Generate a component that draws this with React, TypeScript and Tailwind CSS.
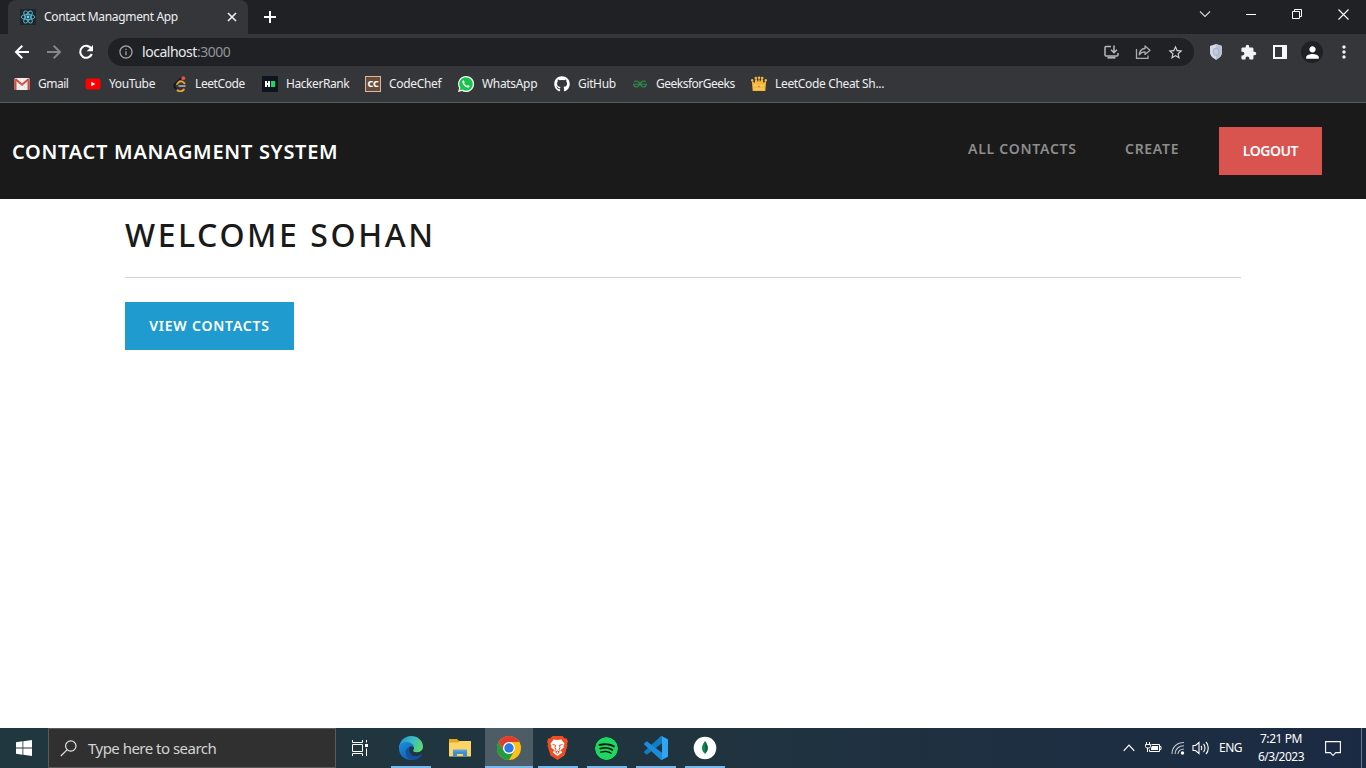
import type { ReactNode } from "react";
import {
  MdExtension,
  MdInfoOutline,
  MdMoreVert,
  MdPerson,
  MdStarBorder,
} from "react-icons/md";
import { FaGithub } from "react-icons/fa";
import { SiGeeksforgeeks, SiSpotify } from "react-icons/si";

function ReactLogo() {
  return (
    <svg width="16" height="16" viewBox="0 0 16 16" className="bg-[#20252b]">
      <g fill="none" stroke="#58bcd6" strokeWidth="0.9">
        <ellipse cx="8" cy="8" rx="6.8" ry="2.6" />
        <ellipse cx="8" cy="8" rx="6.8" ry="2.6" transform="rotate(60 8 8)" />
        <ellipse cx="8" cy="8" rx="6.8" ry="2.6" transform="rotate(120 8 8)" />
      </g>
      <circle cx="8" cy="8" r="1.4" fill="#61dafb" />
    </svg>
  );
}

function TabStrip() {
  return (
    <div className="flex h-[34px] bg-[#202124]">
      <div className="ml-2 flex w-[240px] items-center rounded-t-lg bg-[#35363a] pl-3 pr-[9px] text-xs text-[#eeeff1]">
        <ReactLogo />
        <span className="ml-2 flex-1 whitespace-nowrap tracking-[-0.34px]">Contact Managment App</span>
        <svg width="14" height="14" viewBox="0 0 14 14" fill="none" stroke="#f1f3f4" strokeWidth="1.600"><path d="M3 3l8 8M11 3l-8 8" /></svg>
      </div>
      <div className="flex flex-1 items-center pl-[13px]">
        <svg width="18" height="18" viewBox="0 0 18 18" fill="none" stroke="#fff" strokeWidth="2"><path d="M9 3v12M3 9h12" /></svg>
      </div>
      <div className="flex h-7 items-center">
        <div className="flex w-[46px] justify-center">
          <svg width="12" height="8" viewBox="0 0 12 8" fill="none" stroke="#d6d7d9" strokeWidth="1.1"><path d="M1 1.5l5 5 5-5" /></svg>
        </div>
        <div className="flex w-[46px] justify-center">
          <svg width="10" height="10" viewBox="0 0 10 10"><path d="M0 5h10v1H0z" fill="#fff" /></svg>
        </div>
        <div className="flex w-[46px] justify-center">
          <svg width="10" height="10" viewBox="0 0 10 10" fill="none" stroke="#fff"><path d="M.5 2.5h7v7h-7zM2.5 2.5v-2h7v7h-2" /></svg>
        </div>
        <div className="flex w-[46px] justify-center">
          <svg width="11" height="11" viewBox="0 0 11 11" fill="none" stroke="#fff" strokeWidth="1.1"><path d="M.5.5l10 10M10.5.5l-10 10" /></svg>
        </div>
      </div>
    </div>
  );
}

function Toolbar() {
  return (
    <div className="flex h-9 items-center">
      <div className="flex w-[108px] items-center gap-3 pl-3">
        <svg width="20" height="20" viewBox="0 0 20 20" fill="none" stroke="#fff" strokeWidth="2"><path d="M17 10H4.500M10.300 3.700L4 10l6.300 6.300" /></svg>
        <svg width="20" height="20" viewBox="0 0 20 20" fill="none" stroke="#85868a" strokeWidth="2"><path d="M3 10h12.500M9.700 3.700L16 10l-6.300 6.300" /></svg>
        <svg width="20" height="20" viewBox="0 0 20 20">
          <path d="M15.300 6.600A6 6 0 1 0 15.800 12" fill="none" stroke="#fff" strokeWidth="2.100" />
          <path d="M17 3v6.300h-6.300z" fill="#fff" />
        </svg>
      </div>
      <div className="flex h-7 w-[1086px] items-center rounded-full bg-[#202124] pl-[10px] pr-[10px]">
        <MdInfoOutline size={16} color="#9aa0a6" />
        <div className="ml-2 flex-1 text-[14px] leading-5 tracking-[-0.47px] text-[#e8eaed]">
          localhost<span className="text-[#8f949a]">:3000</span>
        </div>
        <div className="flex items-center gap-4">
          <svg width="16" height="16" viewBox="0 0 16 16" fill="none" stroke="#b5b8bb" strokeWidth="1.5">
            <path d="M8 2.500H3a1 1 0 0 0-1 1v7.400a1 1 0 0 0 1 1h11a1 1 0 0 0 1-1V9" />
            <path d="M11 1.500v7M8 5.700l3 3 3-3" />
            <path d="M4.500 13.700h8" strokeWidth="1.800" />
          </svg>
          <svg width="16" height="16" viewBox="0 0 16 16" fill="none" stroke="#a9acb0" strokeWidth="1.3">
            <path d="M1.500 5v9.400h11.500v-3" />
            <path d="M10 2l5 4.200-5 4.200V7.900c-2.700 0-4.500.7-5.800 2.900.3-3.600 2.300-6 5.800-6.300z" strokeLinejoin="round" />
          </svg>
          <MdStarBorder size={17} color="#d0d2d4" />
        </div>
      </div>
      <div className="flex flex-1 items-center pl-[14px]">
        <svg width="16" height="18" viewBox="0 0 16 18">
          <path d="M8 1l6 1.900v6.300c0 3.600-3.300 6.300-6 7.600-2.700-1.300-6-4-6-7.600V2.900z" fill="#d3d8e6" />
          <path d="M8 1l6 1.900v6.300c0 3.600-3.300 6.300-6 7.600z" fill="#b9c1d5" />
          <ellipse cx="8" cy="8.800" rx="2.800" ry="3.800" fill="#c4cadb" stroke="#9fa8c0" strokeWidth=".8" />
        </svg>
        <MdExtension size={17} color="#f1f3f4" className="ml-[16px]" />
        <svg width="14" height="14" viewBox="0 0 14 14" className="ml-[16px]">
          <path d="M0 0h14v14H0z" fill="#f8f9fa" />
          <path d="M2 2h7v10H2z" fill="#35363a" />
        </svg>
        <div className="ml-[14px] flex h-[22px] w-[22px] items-center justify-center rounded-full bg-[#202124]">
          <MdPerson size={19} color="#fff" />
        </div>
        <MdMoreVert size={20} color="#f1f3f4" className="ml-[11px]" />
      </div>
    </div>
  );
}

function GmailIcon() {
  return (
    <svg width="16" height="16" viewBox="0 0 16 16">
      <rect x="0.500" y="2" width="15" height="12" rx="1" fill="#f0efef" />
      <path d="M.5 14V3.500l2 1.600V14zM15.500 14V3.500l-2 1.600V14z" fill="#d54b3e" />
      <path d="M1.300 3L8 8.700 14.700 3" fill="none" stroke="#d54b3e" strokeWidth="2" />
      <path d="M3.500 13.500L7 8.500M12.500 13.500L9 8.500" stroke="#d2d0d0" strokeWidth=".6" />
    </svg>
  );
}

function YouTubeIcon() {
  return (
    <svg width="16" height="16" viewBox="0 0 16 16">
      <rect x="0.500" y="2.500" width="15" height="11" rx="2.600" fill="#f00" />
      <path d="M6.300 5.700v4.600L10.300 8z" fill="#fff" />
    </svg>
  );
}

function LeetCodeIcon() {
  return (
    <svg width="16" height="16" viewBox="0 0 16 16" fill="none" strokeLinecap="round">
      <path d="M9.500 2L3.500 7.500C1.900 9 2 10.500 3.300 12L5.500 14" stroke="#17181a" strokeWidth="1.900" />
      <path d="M12.500 7.300C10.500 4.900 8.300 4.800 6.600 6.300M5.500 14.200c2 1.800 4.500 1.300 6.300-.700" stroke="#e9a23a" strokeWidth="1.900" />
      <path d="M6.200 6.700L4.800 8.200" stroke="#e9a23a" strokeWidth="1.600" />
      <path d="M7 10h6" stroke="#b8b8b8" strokeWidth="1.600" />
      <circle cx="11.300" cy="2.300" r="2" fill="#d95248" />
    </svg>
  );
}

function HackerRankIcon() {
  return (
    <svg width="16" height="16" viewBox="0 0 16 16">
      <path d="M0 0h16v16H0z" fill="#0e141e" />
      <path d="M3 5h2v2h1V5h2v6H6V9H5v2H3z" fill="#fff" />
      <path d="M9 5h4.200v6H9z" fill="#1fd565" />
    </svg>
  );
}

function CodeChefIcon() {
  return (
    <div className="flex h-4 w-4 items-center justify-center border border-[#d6b99e] bg-[#6a4c38] text-[9px] font-extrabold leading-none tracking-[-0.3px] text-white">
      CC
    </div>
  );
}

function WhatsAppIcon() {
  return (
    <svg width="16" height="16" viewBox="0 0 16 16">
      <path d="M8 0a8 8 0 0 0-6.900 12L0 16l4.100-1.100A8 8 0 1 0 8 0z" fill="#f4f8f5" />
      <path d="M8 1.300a6.700 6.700 0 0 0-5.600 10.400l-.7 2.600 2.700-.7A6.700 6.700 0 1 0 8 1.300z" fill="#18c34b" />
      <path d="M5.600 4.200c-.9.200-1.400 1.200-1.200 2.300.5 2.200 2.500 4.200 4.800 4.900 1.100.3 2.300-.2 2.400-1.500L9.900 9l-.9.900C7.700 9.400 6.700 8.400 6.100 7.100l.7-.9z" fill="#fff" />
    </svg>
  );
}

function CrownIcon() {
  return (
    <svg width="16" height="16" viewBox="0 0 16 16">
      <path d="M.8 4.500L3.500 7l1.300-5.500L7 6l1-5 1 5 2.200-4.500L12.500 7l2.700-2.500L14.300 15H1.700z" fill="#f6b73c" />
      <g fill="#f6b73c"><circle cx="1.200" cy="4.300" r="1.200" /><circle cx="4.800" cy="2" r="1.300" /><circle cx="8" cy="1.700" r="1.300" /><circle cx="11.200" cy="2" r="1.300" /><circle cx="14.800" cy="4.300" r="1.200" /></g>
      <path d="M3 9.500h10M3 12.800h10" stroke="#f9ca62" strokeWidth="1.300" />
      <circle cx="8" cy="10.500" r="1" fill="#df873a" />
    </svg>
  );
}

function Bookmark({ icon, label, box, text }: { icon: ReactNode; label: string; box: string; text: string }) {
  return (
    <div className={`flex items-center gap-2 whitespace-nowrap ${box}`}>
      <span className="flex w-4 shrink-0 justify-center">{icon}</span>
      <span className={text}>{label}</span>
    </div>
  );
}

function BookmarksBar() {
  return (
    <div className="-mt-px flex h-[34px] items-center border-b border-[#59595b] pb-[4px] pl-[14px] text-xs text-[#eeeff1]">
      <Bookmark icon={<GmailIcon />} label="Gmail" box="w-[71px]" text="tracking-[-0.5px]" />
      <Bookmark icon={<YouTubeIcon />} label="YouTube" box="w-[87px]" text="tracking-[-0.35px]" />
      <Bookmark icon={<LeetCodeIcon />} label="LeetCode" box="w-[90px]" text="-ml-px tracking-[-0.4px]" />
      <Bookmark icon={<HackerRankIcon />} label="HackerRank" box="w-[103px]" text="tracking-[-0.43px]" />
      <Bookmark icon={<CodeChefIcon />} label="CodeChef" box="w-[93px]" text="tracking-[-0.33px]" />
      <Bookmark icon={<WhatsAppIcon />} label="WhatsApp" box="w-[96px]" text="tracking-[-0.33px]" />
      <Bookmark icon={<FaGithub size={16} color="#fff" />} label="GitHub" box="w-[78px]" text="tracking-[-0.35px]" />
      <Bookmark icon={<SiGeeksforgeeks size={14} color="#2f8d46" />} label="GeeksforGeeks" box="w-[119px]" text="tracking-[-0.5px]" />
      <Bookmark icon={<CrownIcon />} label="LeetCode Cheat Sh..." box="w-[140px]" text="tracking-[-0.34px]" />
    </div>
  );
}

function SiteHeader() {
  return (
    <header className="flex h-24 items-center justify-between bg-[#1a1a1a] pl-3 pr-11">
      <h1 className="mt-[2px] whitespace-nowrap text-[20px] font-semibold leading-6 tracking-[0.72px] text-white">CONTACT MANAGMENT SYSTEM</h1>
      <nav className="flex items-center whitespace-nowrap text-[14px] font-semibold text-[#8d8d8d]">
        <a className="mb-[6px] w-[157px] tracking-[0.74px]">ALL CONTACTS</a>
        <a className="mb-[6px] w-[94px] tracking-[0.7px]">CREATE</a>
        <button className="h-12 w-[103px] bg-[#d9534f] pb-[2px] text-[14px] font-semibold tracking-[-0.45px] text-white">LOGOUT</button>
      </nav>
    </header>
  );
}

function ChromeIcon() {
  return (
    <svg width="24" height="24" viewBox="0 0 24 24">
      <circle cx="12" cy="12" r="12" fill="#fbc116" />
      <path d="M12 12L1.600 6A12 12 0 0 1 22.400 6H12z" fill="#e33b2e" />
      <path d="M1.600 6l5.200 9L12 12V6z" fill="#e33b2e" />
      <path d="M1.600 6A12 12 0 0 0 12 24l5.200-9H6.800z" fill="#249a41" />
      <circle cx="12" cy="12" r="6" fill="#fff" />
      <circle cx="12" cy="12" r="4.700" fill="#2979e8" />
    </svg>
  );
}

function EdgeIcon() {
  return (
    <svg width="24" height="24" viewBox="0 0 24 24">
      <defs>
        <linearGradient id="edge-top" x1="0" y1="0.300" x2="1" y2="0.600">
          <stop offset="0" stopColor="#2a93cf" /><stop offset=".5" stopColor="#37bcc6" /><stop offset="1" stopColor="#62d86b" />
        </linearGradient>
        <linearGradient id="edge-low" x1="0" y1="0" x2=".6" y2="1">
          <stop offset="0" stopColor="#1a8edb" /><stop offset="1" stopColor="#1162b8" />
        </linearGradient>
      </defs>
      <path d="M0 11.500C.5 5 5.700 0 12 0c7 0 12 5 12 10.500 0 3.700-2.800 5.900-6 5.900-2.500 0-4-.8-4-1.700 0-.8.900-1.500.9-3.200L8 9 0 13z" fill="url(#edge-top)" />
      <path d="M0 12.500C0 8.800 3.300 6 7.400 6c4.300 0 7.500 2.600 7.500 5.700 0 1.800-.9 2.200-.9 3L11 22l4 1.700C7 25.500 0 20 0 12.500z" fill="url(#edge-low)" />
      <path d="M10.600 10.800C8.700 13 9 19.500 15.500 20c3 .3 5-.9 6.800-1.800.5-.2.800.2.500.7C20.800 22.200 17.500 24 14 24c-4.300 0-7.500-3.500-7.300-7.700.1-2.800 1.600-4.800 3.900-5.500z" fill="#15509e" />
      <path d="M10.600 10.800c1.500-.8 3.600-.4 4.300.9 0 1.800-.9 2.200-.9 3 0 1.200 2 1.900 4.500 1.700 1.700-.1 2.700-.5 3.800-1.300-.6 2-2 4.500-5.500 4.900C10.500 20 8.800 14.300 10.600 10.800z" fill="#203740" />
    </svg>
  );
}

function FolderIcon() {
  return (
    <svg width="24" height="24" viewBox="0 0 24 24">
      <path d="M1 3h8l2 2h12v4H1z" fill="#e5a91c" />
      <path d="M1 6.500h9l2-1.500h11v15.500H1z" fill="#fcd467" />
      <path d="M5 14.500h14V21h-4v-3H9v3H5z" fill="#3d8fd0" />
      <path d="M5 13.500h14v2H5z" fill="#58a8e0" />
    </svg>
  );
}

function BraveIcon() {
  return (
    <svg width="21" height="24" viewBox="0 0 21 24">
      <path d="M5.500 0h10l2 2.300 2-.1 1.500 3.400-1 2.300.5 1.500-3 10L10.500 24 3.500 19.400.5 9.400 1 7.900 0 5.600l1.500-3.400 2 .1z" fill="#ee4d23" />
      <path d="M10.500 4.100l3.800-.7 3.300 4.400-1 1.700.2 2-3.100 2.600 1.500 2.300-4.700 3.500-4.700-3.500 1.500-2.300-3.100-2.600.2-2-1-1.700 3.300-4.400z" fill="#fff" />
      <path d="M5.500 8.500l3 .8-.5 2.500 1 1.500-1.500 2M15.500 8.500l-3 .8.500 2.500-1 1.500 1.500 2M8.500 16l2-1 2 1-2 1.500z" fill="none" stroke="#ee4d23" strokeWidth="1" />
    </svg>
  );
}

function VSCodeIcon() {
  return (
    <svg width="24" height="24" viewBox="0 0 24 24">
      <path d="M23.200 3L18.300.3c-.7-.4-1.300-.2-1.800.3L.4 15.200c-.5.500-.5 1.100 0 1.500L2 18.200c.4.400 1 .4 1.500.1L18 7.200l6-2.900c0-.6-.3-1.100-.8-1.300z" fill="#0f7cc4" />
      <path d="M23.200 21l-4.900 2.700c-.7.400-1.300.2-1.800-.3L.4 8.800c-.5-.5-.5-1.100 0-1.500L2 5.800c.4-.4 1-.4 1.500-.1L18 16.800l6 2.900c0 .6-.3 1.100-.8 1.300z" fill="#1b8cd8" />
      <path d="M18 .4L23.200 3c.5.200.8.700.8 1.300v15.400c0 .6-.3 1.100-.8 1.300L18 23.600c-.6.300-1 .2-1.500-.2.700.5 1.500 0 1.500-.8V1.400c0-.8-.8-1.300-1.500-.8.5-.4.900-.5 1.500-.2z" fill="#31a6f0" />
    </svg>
  );
}

function CompassIcon() {
  return (
    <svg width="24" height="24" viewBox="0 0 24 24">
      <circle cx="12" cy="12" r="11.300" fill="#fff" />
      <path d="M12 5c-4 5-3.800 9.500-.4 12.300L12 19z" fill="#128a4c" />
      <path d="M12 5c4 5 3.800 9.500.4 12.300L12 19z" fill="#116149" />
    </svg>
  );
}

function TaskItem({ children, active = false, running = true }: { children: ReactNode; active?: boolean; running?: boolean }) {
  return (
    <div className={`flex h-10 flex-col items-center ${active ? "ml-px w-12 bg-white/20" : "w-[49px]"}`}>
      <div className="flex h-[38px] items-center pt-[2px]">{children}</div>
      <div className={`h-[2px] ${active ? "w-full" : "w-10"} ${running ? "bg-[#76b9ed]" : ""}`} />
    </div>
  );
}

function Taskbar() {
  return (
    <footer className="flex h-10 bg-linear-to-r from-[#20373f] via-[#20343f] to-[#1b2a43] text-white">
      <div className="flex w-12 items-center justify-center">
        <svg width="16" height="16" viewBox="0 0 16 16" fill="#fff"><path d="M0 2.200L6.500 1.300v6.200H0zM7.300 1.200L16 0v7.500H7.300zM0 8.400h6.500v6.300L0 13.800zM7.300 8.400H16V16l-8.700-1.200z" /></svg>
      </div>
      <div className="flex w-[288px] items-center border border-[#5b5b5b] bg-[#303030] pl-[11px]">
        <svg width="17" height="17" viewBox="0 0 17 17" fill="none" stroke="#e4e4e4" strokeWidth="1.200"><circle cx="10.800" cy="6" r="5.200" /><path d="M7 9.800L.8 16" /></svg>
        <span className="ml-[11px] text-[15px] tracking-[-0.52px] text-[#d4d4d4]">Type here to search</span>
      </div>
      <div className="flex w-12 items-center justify-center">
        <svg width="18" height="16" viewBox="0 0 18 16" fill="none" stroke="#fff" strokeWidth="1">
          <path d="M1.500 0v2.500h10V0M1.500 16v-2.500h10V16M1.500 4.500h10v7h-10zM15.500 0v2.500M15.500 8.500V16" />
          <path d="M14 4h3v3h-3z" fill="#fff" stroke="none" />
        </svg>
      </div>
      <div className="ml-[2px] flex">
        <TaskItem><EdgeIcon /></TaskItem>
        <TaskItem running={false}><FolderIcon /></TaskItem>
        <TaskItem active><ChromeIcon /></TaskItem>
        <TaskItem><BraveIcon /></TaskItem>
        <TaskItem><SiSpotify size={23} color="#1ed760" className="rounded-full bg-[#121c18]" /></TaskItem>
        <TaskItem><VSCodeIcon /></TaskItem>
        <TaskItem><CompassIcon /></TaskItem>
      </div>
      <div className="ml-auto flex items-center text-xs">
        <svg width="12" height="8" viewBox="0 0 12 8" fill="none" stroke="#fff" strokeWidth="1.200"><path d="M.7 6.800L6 1.200l5.300 5.600" /></svg>
        <svg width="17" height="14" viewBox="0 0 17 14" fill="none" stroke="#fff" className="ml-[10px]">
          <path d="M6.500 3.500h8v7h-10v-2M14.500 5.500h1.500v3h-1.500M2.500 7v4M1.500 1v2M4.500 1v2" />
          <path d="M.5 3.500h5v2l-1 1.500h-3L.5 5.500z" />
          <path d="M7 5h6v4H6V7z" fill="#fff" stroke="none" />
        </svg>
        <svg width="14" height="14" viewBox="0 0 14 14" fill="none" stroke="#c3cad5" strokeWidth="1.100" className="ml-[9px]">
          <path d="M1 13C1 6 6 1.500 13 1.500M4 13c0-5 4-8.300 9-8.300M7 13c0-3 2.500-5 6-5" />
          <circle cx="11.500" cy="12" r="1.700" fill="#fff" stroke="none" />
        </svg>
        <svg width="18" height="14" viewBox="0 0 18 14" fill="none" stroke="#fff" strokeWidth="1.100" className="ml-[7px]">
          <path d="M1 4.500h2.500L7 1.500v11l-3.500-3H1zM9 5c1 1 1 3 0 4M11.500 3c2 2 2 6 0 8M14 1c3 3 3 9 0 12" />
        </svg>
        <span className="ml-[9px] w-[39px] tracking-[-0.5px]">ENG</span>
        <div className="flex w-[46px] flex-col items-center whitespace-nowrap leading-[18px]">
          <span className="tracking-[-0.42px]">7:21 PM</span>
          <span className="tracking-[-0.5px]">6/3/2023</span>
        </div>
        <svg width="16" height="17" viewBox="0 0 16 17" fill="none" stroke="#fff" strokeWidth="1.100" className="ml-[21px] mr-[20px]"><path d="M.6 1.600h14.800v11h-4.700L8 15.500l-2.700-2.900H.6z" /></svg>
        <div className="mr-[4px] h-10 w-px bg-[#6d7889]" />
      </div>
    </footer>
  );
}

export default function App() {
  return (
    <div className="flex h-[768px] w-[1366px] flex-col overflow-hidden bg-white font-['Noto_Sans','Open_Sans',sans-serif]">
      <div className="bg-[#35363a]">
        <TabStrip />
        <Toolbar />
        <BookmarksBar />
      </div>
      <SiteHeader />
      <main className="flex-1 px-[125px] pt-[13px]">
        <h2 className="whitespace-nowrap text-[32px] font-medium leading-[46px] tracking-[2.58px] text-[#1a1a1a]">WELCOME SOHAN</h2>
        <hr className="mt-[19px] border-[#d3d3d3]" />
        <button className="mt-6 h-12 w-[169px] whitespace-nowrap bg-[#1f9bcf] pb-[2px] text-[14px] font-semibold tracking-[0.8px] text-white">VIEW CONTACTS</button>
      </main>
      <Taskbar />
    </div>
  );
}
